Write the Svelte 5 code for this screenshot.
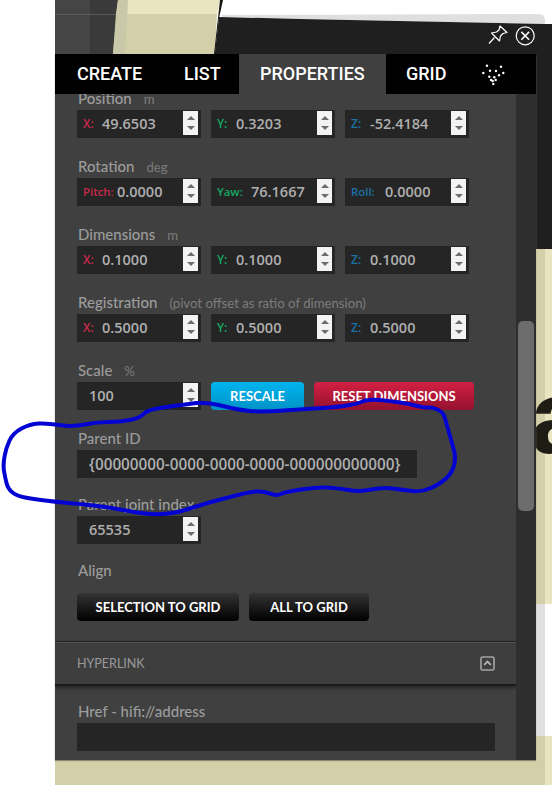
<script>
	const vectors = [
		{
			label: 'Position',
			unit: 'm',
			fields: [
				{ axis: 'X:', value: '49.6503', tone: 'red' },
				{ axis: 'Y:', value: '0.3203', tone: 'green' },
				{ axis: 'Z:', value: '-52.4184', tone: 'blue' }
			]
		},
		{
			label: 'Rotation',
			unit: 'deg',
			wide: true,
			fields: [
				{ axis: 'Pitch:', value: '0.0000', tone: 'red' },
				{ axis: 'Yaw:', value: '76.1667', tone: 'green' },
				{ axis: 'Roll:', value: '0.0000', tone: 'blue' }
			]
		},
		{
			label: 'Dimensions',
			unit: 'm',
			fields: [
				{ axis: 'X:', value: '0.1000', tone: 'red' },
				{ axis: 'Y:', value: '0.1000', tone: 'green' },
				{ axis: 'Z:', value: '0.1000', tone: 'blue' }
			]
		},
		{
			label: 'Registration',
			unit: '(pivot offset as ratio of dimension)',
			fields: [
				{ axis: 'X:', value: '0.5000', tone: 'red' },
				{ axis: 'Y:', value: '0.5000', tone: 'green' },
				{ axis: 'Z:', value: '0.5000', tone: 'blue' }
			]
		}
	];

	const dots = [
		[487, 65.7], [501, 66.7], [490, 70.7], [483.3, 73], [496, 71], [503.3, 73], [489.3, 76.7],
		[494.3, 77.3], [499, 75.3], [491, 80], [495.7, 80], [492.7, 81], [493.3, 84]
	];

	// the hand-drawn ring round Parent ID
	const scribble = [
		[196, 403], [173, 406], [147, 410], [140, 418], [120, 422], [97, 422], [72, 427], [47, 423],
		[30, 424], [13, 433], [6, 448], [3, 465], [5, 477], [8, 489], [17, 496], [33, 499], [57, 502],
		[80, 504], [107, 507], [133, 512], [157, 515], [180, 512], [200, 505], [230, 497], [250, 492],
		[263, 491], [277, 496], [285, 492], [317, 487], [337, 488], [360, 492], [383, 487], [403, 490],
		[422, 492], [440, 484], [452, 473], [456, 458], [452, 443], [446, 422], [443, 412], [432, 407],
		[425, 408], [410, 404], [390, 401], [368, 399], [357, 404], [337, 407], [307, 409], [260, 412],
		[240, 410], [227, 407], [210, 403], [196, 403]
	];

	function smooth(pts) {
		let d = `M${pts[0][0]},${pts[0][1]}`;
		for (let i = 1; i < pts.length - 1; i++) {
			const mx = (pts[i][0] + pts[i + 1][0]) / 2;
			const my = (pts[i][1] + pts[i + 1][1]) / 2;
			d += ` Q${pts[i][0]},${pts[i][1]} ${mx},${my}`;
		}
		const last = pts[pts.length - 1];
		return d + ` L${last[0]},${last[1]}`;
	}
</script>

{#snippet spinner()}
	<span class="spinner"><i class="up"></i><i class="down"></i></span>
{/snippet}

<div class="page">
	<!-- whatever sits behind the window -->
	<svg class="scene" width="552" height="785" viewBox="0 0 552 785">
		<rect x="55" y="0" width="35" height="54" fill="#454545" />
		<rect x="90" y="0" width="28" height="54" fill="#3a3a3a" />
		<rect x="55" y="14" width="62" height="1" fill="#5a5a5a" />
		<polygon points="118,0 220,0 217,14 116,14" fill="#e8e5c0" />
		<polygon points="116,14 217,14 215,54 113,54" fill="#d3cfa8" />
		<polygon points="118,0 128,0 125,54 113,54" fill="#c9c8a8" />
		<polygon points="220,0 223,0 219,18 215,54 214,54" fill="#15140e" />
		<polygon points="222,15 538,14 543,15 545,19 545,24 300,19 222,17" fill="#dfdfdf" />
		<polygon points="219,17 300,19 545,24 552,24 552,249 536,249 536,60 214,60" fill="#1f1f1f" />
		<rect x="55" y="760" width="490" height="25" fill="#d3cfa8" />
		<rect x="536" y="249" width="9" height="355" fill="#d3cfa8" />
		<rect x="545" y="249" width="7" height="355" fill="#e8e5c0" />
		<rect x="536" y="604" width="9" height="132" fill="#e0e0e0" />
		<rect x="536" y="736" width="9" height="49" fill="#d3cfa8" />
		<rect x="545" y="736" width="7" height="49" fill="#e8e5c0" />
	</svg>
	<span class="backdrop-letter">a</span>

	<div class="window">
		<nav class="tabs">
			<span class="tab create">CREATE</span>
			<span class="tab list">LIST</span>
			<span class="tab active">PROPERTIES</span>
			<span class="tab grid">GRID</span>
		</nav>

		<div class="body">
			<div class="content">
				{#each vectors as group}
					<section class="group">
						<div class="label">{group.label}<span class="unit">{group.unit}</span></div>
						<div class="row">
							{#each group.fields as f}
								<div class="input" class:wide={group.wide}>
									<span class="axis {f.tone}">{f.axis}</span>
									<span class="value">{f.value}</span>
									{@render spinner()}
								</div>
							{/each}
						</div>
					</section>
				{/each}

				<section class="group">
					<div class="label">Scale<span class="unit">%</span></div>
					<div class="row">
						<div class="input plain">
							<span class="value">100</span>
							{@render spinner()}
						</div>
						<button class="btn blue-btn rescale">RESCALE</button>
						<button class="btn red-btn reset">RESET DIMENSIONS</button>
					</div>
				</section>

				<section class="group tight">
					<div class="label">Parent ID</div>
					<div class="input plain parent">
						<span class="value">{'{00000000-0000-0000-0000-000000000000}'}</span>
					</div>
				</section>

				<section class="group">
					<div class="label">Parent joint index</div>
					<div class="input plain">
						<span class="value">65535</span>
						{@render spinner()}
					</div>
				</section>

				<section class="align">
					<div class="label">Align</div>
					<div class="row">
						<button class="btn black-btn sel">SELECTION TO GRID</button>
						<button class="btn black-btn all">ALL TO GRID</button>
					</div>
				</section>

				<header class="section-head">
					<span>HYPERLINK</span>
					<svg width="15" height="15" viewBox="0 0 15 15" fill="none">
						<rect x="1" y="1" width="13" height="13" rx="1.5" stroke="#a5a5a5" stroke-width="1.6" />
						<path d="M4.2 8.8 7.5 5.6l3.3 3.2" stroke="#b5b5b5" stroke-width="1.8" />
					</svg>
				</header>

				<section class="href">
					<div class="label">Href - hifi://address</div>
					<div class="input blank"></div>
				</section>
			</div>

			<div class="track"><div class="thumb"></div></div>
		</div>
	</div>

	<!-- header icons and tab icon lie over the window -->
	<svg class="overlay" width="552" height="785" viewBox="0 0 552 785">
		<g fill="none" stroke="#fff" stroke-width="1.2" stroke-linejoin="round">
			<path d="M500 26 507 32.5 503 33.5 500.5 36 499.5 41 491.5 33 496.5 32 499 30Z" />
			<path d="M489 43.5 494.5 37.5" />
			<circle cx="525.2" cy="35.8" r="9" />
			<path d="M521.3 31.9 529.1 39.7M529.1 31.9 521.3 39.7" stroke-width="1.5" />
		</g>
		{#each dots as [cx, cy]}
			<circle {cx} {cy} r="1.2" fill="#fff" />
		{/each}
		<path
			d={smooth(scribble)}
			fill="none"
			stroke="#0404d2"
			stroke-width="4"
			stroke-linecap="round"
			stroke-linejoin="round"
		/>
	</svg>
</div>

<style>
	:global(body) {
		margin: 0;
		background: #fff;
	}

	.page {
		position: relative;
		width: 552px;
		height: 785px;
		overflow: hidden;
		background: #fff;
		font-family: 'Open Sans', sans-serif;
	}

	.scene,
	.overlay {
		position: absolute;
		top: 0;
		left: 0;
	}
	.overlay {
		pointer-events: none;
	}

	.backdrop-letter {
		position: absolute;
		left: 530px;
		top: 357px;
		font-family: 'Liberation Sans', sans-serif;
		font-weight: 700;
		font-size: 104px;
		line-height: 120px;
		color: #1e1c14;
	}

	.window {
		position: absolute;
		left: 55px;
		top: 54px;
		width: 481px;
		height: 706px;
		display: flex;
		flex-direction: column;
		background: #404040;
		box-shadow: 0 1px 1px #8a886f;
	}

	.tabs {
		display: flex;
		flex: none;
		height: 40px;
		background: #000;
		font-family: Roboto, sans-serif;
		font-weight: 500;
		font-size: 18px;
		line-height: 40px;
		color: #fff;
	}
	.tab.create {
		margin-left: 22px;
		width: 107px;
	}
	.tab.list {
		width: 55px;
	}
	.tab.active {
		width: 147px;
		padding-left: 21px;
		box-sizing: border-box;
		background: #404040;
	}
	.tab.grid {
		margin-left: 20px;
	}

	.body {
		flex: 1;
		display: flex;
		min-height: 0;
	}

	.content {
		width: 461px;
		overflow: hidden;
	}

	.group {
		margin: 0 0 16px 22px;
	}
	.group:first-child {
		margin-top: -8px;
	}
	.group.tight {
		margin-bottom: 14px;
	}

	.label {
		height: 24px;
		font-family: Lato, sans-serif;
		font-size: 15px;
		font-weight: 500;
		line-height: 24px;
		color: #9c9c9c;
		padding-left: 1px;
	}
	.unit {
		margin-left: 12px;
		font-size: 13.2px;
		font-weight: 400;
		color: #7c7c7c;
	}

	.row {
		display: flex;
		gap: 10px;
	}

	.input {
		position: relative;
		display: flex;
		align-items: center;
		box-sizing: border-box;
		width: 124px;
		height: 28px;
		padding: 0 0 1px 6px;
		background: #252525;
		font-size: 14.5px;
		font-weight: 600;
		color: #afafaf;
	}
	.input.plain {
		padding-left: 12px;
	}
	.input.parent {
		width: 340px;
		font-size: 15.3px;
	}
	.input.blank {
		width: 418px;
	}

	.axis {
		flex: none;
		width: 19px;
		font-size: 12px;
		font-weight: 600;
	}
	.input.wide .axis {
		width: 34px;
		font-size: 11.4px;
	}
	.red {
		color: #c92a4a;
	}
	.green {
		color: #17a862;
	}
	.blue {
		color: #1a72a5;
	}

	.spinner {
		position: absolute;
		top: 1px;
		right: 3px;
		display: flex;
		flex-direction: column;
		align-items: center;
		justify-content: space-between;
		box-sizing: border-box;
		width: 15px;
		height: 24px;
		padding: 5px 0;
		background: #f3f3f3;
	}
	.spinner i {
		width: 0;
		height: 0;
		border-left: 4px solid transparent;
		border-right: 4px solid transparent;
	}
	.spinner .up {
		border-bottom: 4px solid #6c6c6c;
	}
	.spinner .down {
		border-top: 4px solid #6c6c6c;
	}

	.btn {
		height: 28px;
		padding: 0;
		border: none;
		border-radius: 4px;
		font-family: Lato, sans-serif;
		font-size: 13px;
		font-weight: 700;
		color: #fff;
	}
	.rescale {
		width: 93px;
	}
	.reset {
		width: 160px;
	}
	.blue-btn {
		background: linear-gradient(#00b4ef, #0093c5);
	}
	.red-btn {
		background: linear-gradient(#d42043, #93122e);
	}
	.black-btn {
		background: linear-gradient(#343434, #000);
	}
	.sel {
		width: 162px;
	}
	.all {
		width: 120px;
	}

	.align {
		margin-left: 22px;
		margin-top: -2px;
	}
	.align .row {
		margin-top: 11px;
	}

	.section-head {
		display: flex;
		align-items: center;
		justify-content: space-between;
		box-sizing: border-box;
		height: 45px;
		margin-top: 20px;
		padding: 0 21px 0 22px;
		border-top: 1px solid #242424;
		border-bottom: 2px solid #1b1b1b;
		box-shadow: inset 0 1px 0 #525252, 0 2px 4px rgba(0, 0, 0, 0.45);
		background: #3e3e3e;
		font-family: Lato, sans-serif;
		font-size: 12.5px;
		color: #9a9a9a;
	}

	.href {
		margin: 13px 0 0 22px;
	}

	.track {
		width: 20px;
		padding-top: 227px;
		box-sizing: border-box;
		background: #2e2e2e;
	}
	.thumb {
		width: 16px;
		height: 190px;
		margin-left: 2px;
		border-radius: 5px;
		background: #6c6c6c;
	}
</style>
